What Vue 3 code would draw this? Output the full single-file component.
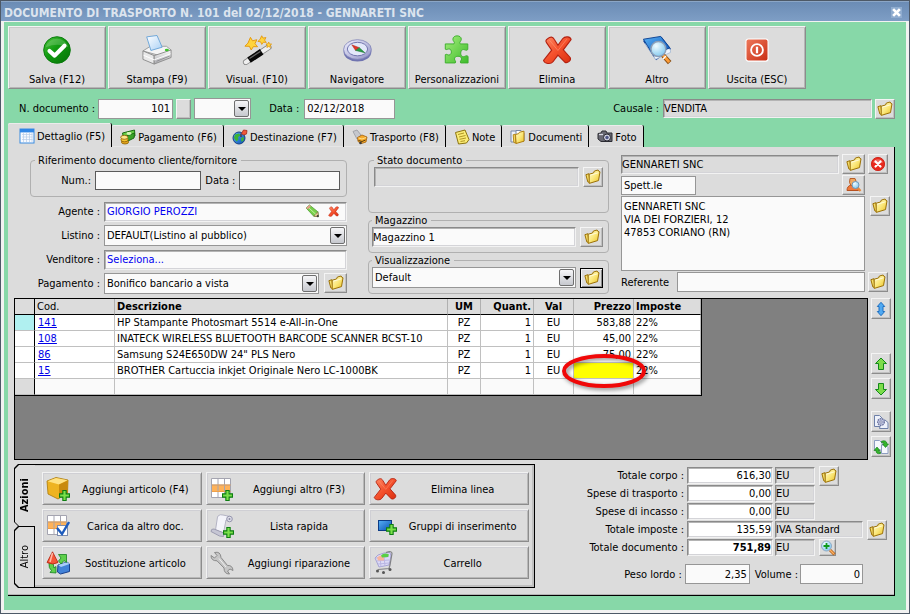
<script setup>
import { ref } from 'vue'

const toolbar = [
  { icon: 'check', label: 'Salva (F12)' },
  { icon: 'printer', label: 'Stampa (F9)' },
  { icon: 'wand', label: 'Visual. (F10)' },
  { icon: 'compass', label: 'Navigatore' },
  { icon: 'puzzle', label: 'Personalizzazioni' },
  { icon: 'cross', label: 'Elimina' },
  { icon: 'book', label: 'Altro' },
  { icon: 'power', label: 'Uscita (ESC)' },
]

const tabs = [
  { icon: 'sheet', label: 'Dettaglio (F5)' },
  { icon: 'money', label: 'Pagamento (F6)' },
  { icon: 'globe', label: 'Destinazione (F7)' },
  { icon: 'transport', label: 'Trasporto (F8)' },
  { icon: 'note', label: 'Note' },
  { icon: 'docs', label: 'Documenti' },
  { icon: 'camera', label: 'Foto' },
]
const activeTab = ref(0)

const address = ref('GENNARETI SNC\nVIA DEI FORZIERI, 12\n47853 CORIANO (RN)')

const rows = [
  { cod: '141', desc: 'HP Stampante Photosmart 5514 e-All-in-One', price: '583,88' },
  { cod: '108', desc: 'INATECK WIRELESS BLUETOOTH BARCODE SCANNER BCST-10', price: '45,00' },
  { cod: '86', desc: 'Samsung S24E650DW 24" PLS Nero', price: '75,00' },
  { cod: '15', desc: 'BROTHER Cartuccia inkjet Originale Nero LC-1000BK', price: '' },
]

const actions = [
  { icon: 'box-add', label: 'Aggiungi articolo (F4)' },
  { icon: 'table-add', label: 'Aggiungi altro (F3)' },
  { icon: 'cross', label: 'Elimina linea' },
  { icon: 'table-check', label: 'Carica da altro doc.' },
  { icon: 'scroll-add', label: 'Lista rapida' },
  { icon: 'group-add', label: 'Gruppi di inserimento' },
  { icon: 'swap', label: 'Sostituzione articolo' },
  { icon: 'wrench', label: 'Aggiungi riparazione' },
  { icon: 'cart', label: 'Carrello' },
]

const totals = [
  { id: 'corpo', label: 'Totale corpo :', value: '616,30', unit: 'EU', button: 'folder' },
  { id: 'trasporto', label: 'Spese di trasporto :', value: '0,00', unit: 'EU' },
  { id: 'incasso', label: 'Spese di incasso :', value: '0,00', unit: 'EU' },
  { id: 'imposte', label: 'Totale imposte :', value: '135,59', unit: 'IVA Standard', button: 'folder', wide: true },
  { id: 'documento', label: 'Totale documento :', value: '751,89', unit: 'EU', button: 'zoom', bold: true },
]
</script>

<template>
  <div class="window">
    <svg class="defs" width="0" height="0" aria-hidden="true">
      <defs>
        <linearGradient id="g-green" x1="0" y1="0" x2="1" y2="1"><stop offset="0" stop-color="#4cc43c" /><stop offset=".45" stop-color="#119a10" /><stop offset="1" stop-color="#067006" /></linearGradient>
        <linearGradient id="g-lime" x1="0" y1="0" x2="1" y2="1"><stop offset="0" stop-color="#a5ee7c" /><stop offset="1" stop-color="#3dbb2b" /></linearGradient>
        <linearGradient id="g-red" x1="0" y1="0" x2="1" y2="1"><stop offset="0" stop-color="#ff8a66" /><stop offset=".5" stop-color="#f4502c" /><stop offset="1" stop-color="#d92f10" /></linearGradient>
        <linearGradient id="g-power" x1="0" y1="0" x2="1" y2="1"><stop offset="0" stop-color="#ee7a5c" /><stop offset="1" stop-color="#c92c12" /></linearGradient>
        <linearGradient id="g-gold" x1="0" y1="0" x2="1" y2="1"><stop offset="0" stop-color="#fffbd0" /><stop offset=".5" stop-color="#fbe87c" /><stop offset="1" stop-color="#eabf20" /></linearGradient>
        <linearGradient id="g-blue" x1="0" y1="0" x2="1" y2="1"><stop offset="0" stop-color="#57b1f5" /><stop offset="1" stop-color="#0a4fb4" /></linearGradient>
        <linearGradient id="g-grey" x1="0" y1="0" x2="0" y2="1"><stop offset="0" stop-color="#fdfdfd" /><stop offset="1" stop-color="#a9a9ad" /></linearGradient>
        <linearGradient id="g-paper" x1="0" y1="0" x2="1" y2="1"><stop offset="0" stop-color="#ffffff" /><stop offset="1" stop-color="#a9d0f5" /></linearGradient>
        <linearGradient id="g-lilac" x1="0" y1="0" x2="1" y2="1"><stop offset="0" stop-color="#f2f2ff" /><stop offset="1" stop-color="#8f90c4" /></linearGradient>
        <radialGradient id="g-lens" cx=".35" cy=".3" r=".8"><stop offset="0" stop-color="#f0fcff" /><stop offset="1" stop-color="#79c4ee" /></radialGradient>
      </defs>

      <symbol id="plus" viewBox="0 0 10 10"><path d="M3.5.5h3v3h3v3h-3v3h-3v-3h-3v-3h3z" fill="#7be04a" stroke="#0d7d12" /></symbol>

      <symbol id="check" viewBox="0 0 32 32">
        <circle cx="16" cy="16" r="14.200" fill="url(#g-green)" stroke="#087a0b" />
        <path d="M4 13a12.500 12.500 0 0 1 24 0q-11-5-24 0z" fill="#fff" opacity=".18" />
        <path d="M8 17l5.500 5L24 11.500" fill="none" stroke="#fff" stroke-width="4.400" stroke-linecap="round" stroke-linejoin="round" />
      </symbol>
      <symbol id="printer" viewBox="0 0 32 32">
        <path d="M1 17l8-5h17l5 4-12 6z" fill="#f5f5f5" stroke="#9b9b9b" />
        <path d="M5 2l11-1.500 5.500 12.500-12 3.500z" fill="url(#g-paper)" stroke="#6ba4d8" />
        <path d="M1 17l12 5v9L1 26z" fill="#e9e9e9" stroke="#8c8c8c" />
        <path d="M13 22l18-6v8l-18 7z" fill="url(#g-grey)" stroke="#8c8c8c" />
        <path d="M1.500 21.500l11.500 5 17.500-6.500" fill="none" stroke="#fff" />
        <path d="M15.500 28l14-5.500" fill="none" stroke="#8e8e92" />
        <ellipse cx="26.500" cy="16" rx="2.200" ry="1.300" fill="#3ec42c" />
      </symbol>
      <symbol id="wand" viewBox="0 0 32 32">
        <path d="M4 29L28.500 13" stroke="#7f7f7f" stroke-width="6" stroke-linecap="round" />
        <path d="M4 29L28.500 13" stroke="#efefef" stroke-width="4.400" stroke-linecap="round" />
        <path d="M7.500 26.800L21 17.900" stroke="#080808" stroke-width="6.800" />
        <path d="M8 25l11.500-7.500" stroke="#696969" stroke-width="1.300" />
        <path d="M9 2.500l2.200 3.700 4.600-1.200-1.900 4.200 2.700 3.300-4.500-.1-2.300 3.600-1.900-3.900-4.800-.2 3.300-3.300z" fill="#ffd43c" stroke="#e3960b" />
        <path d="M21 .8l1.400 2.500 3.100-.6-1.400 2.800 1.800 2.400-3.100-.2-1.700 2.300-1.200-2.700-3-.5 2.300-2z" fill="#ffd43c" stroke="#e3960b" stroke-width=".9" />
        <path d="M28.500 7.500l.8 2 2.300.2-1.700 1.500.5 2.100-1.900-1-2 1 .5-2.200-1.400-1.500 2.100-.2z" fill="#ffd43c" stroke="#e3960b" stroke-width=".8" />
      </symbol>
      <symbol id="compass" viewBox="0 0 32 32">
        <ellipse cx="16.500" cy="17.800" rx="14.800" ry="10.500" fill="#7074b0" />
        <ellipse cx="16.500" cy="15.500" rx="14.800" ry="10.500" fill="url(#g-lilac)" stroke="#7a7db4" stroke-width=".8" />
        <ellipse cx="16.500" cy="15" rx="10.800" ry="7.200" fill="#e3e8fa" stroke="#6d70ab" />
        <path d="M10.500 10.500l8 3-4 3z" fill="#e1362a" stroke="#a8201a" stroke-width=".5" />
        <path d="M18.500 13.500l6 5.500-10-2.500z" fill="#279b44" stroke="#146b2b" stroke-width=".5" />
      </symbol>
      <symbol id="puzzle" viewBox="0 0 32 32">
        <path d="M3.500 9.500h9.300c1.700-1.600-1.300-2.800-1.200-5 .1-4.800 9-4.800 9 0 0 2.200-2.800 3.400-1.200 5h8.100v6c-1.300 1.700-2.800.1-4.700 0-3.800.2-3.800 7.500 0 7.600 2 0 3.400-2 5-.3v7H20c-1.600-1.500 1-2.600.9-4.300-.3-3.800-7.500-3.800-7.600 0 0 1.900 2.300 2.700.8 4.300H3.500V21c1.400-1.200 2.500.6 4 .4 3.400-.5 3.300-6.300 0-6.600-1.500-.1-2.600 1.500-4 .3z" fill="url(#g-lime)" stroke="#3cae2d" />
      </symbol>
      <symbol id="cross" viewBox="0 0 32 32">
        <path d="M6 4c3-2.500 5.500-2.200 7 .5l4 6.500 5-7C24.500 1 30.500 1.500 31 5l-8.300 10.800 7.300 8.200c1.600 3-2.500 6.300-5.500 5.200L17 21.500l-5.300 7c-2.200 2.900-9.200 2.500-10-1.300l8.600-11-5.500-8c-1.200-1.700-.6-3.200 1.200-4.200z" fill="url(#g-red)" stroke="#b32010" stroke-width="1.200" />
        <path d="M8 5.500l9 11 9.500-12" fill="none" stroke="#ff9d7d" opacity=".6" />
      </symbol>
      <symbol id="book" viewBox="0 0 32 32">
        <path d="M1 6l20-4 10 13-16 12z" fill="#0b3f9a" />
        <path d="M3 9l27 6 .5 3.500-16 7.500z" fill="#eef4fc" stroke="#8aa5c9" stroke-width=".6" />
        <path d="M1.500 4.500L20 1.500l9.500 12-17 9z" fill="url(#g-blue)" stroke="#0b4192" />
        <path d="M22 21l7.500 8.500" stroke="#8c5114" stroke-width="5" />
        <path d="M22.500 21.500l6.500 7.500" stroke="#ff9d38" stroke-width="3" />
        <path d="M25.500 22.500l-3 3" stroke="#fff" stroke-width="1.600" />
        <circle cx="17.500" cy="15" r="8" fill="url(#g-lens)" stroke="#8c9fb8" stroke-width="1.600" />
      </symbol>
      <symbol id="power" viewBox="0 0 32 32">
        <rect x="4.200" y="4.200" width="23.600" height="23.600" rx="2.500" fill="url(#g-power)" stroke="#fff" stroke-width="1.200" />
        <circle cx="16" cy="16" r="6.300" fill="none" stroke="#fff" stroke-width="2" />
        <path d="M16 12.500v7" stroke="#fff" stroke-width="2.400" />
      </symbol>

      <symbol id="folder" viewBox="0 0 16 16">
        <path d="M.9 5.700l3-1 1.200 9-2.300-.8z" fill="#f6de68" stroke="#9c7208" />
        <path d="M4.200 5.200L8.500 4l.9-2 3.700-1 .9 1.500 1 .3-1.500 8.800-9.300 2.800z" fill="url(#g-gold)" stroke="#9c7208" />
        <path d="M5.300 6.200l8.200-2.400" stroke="#fffce0" stroke-width=".9" />
      </symbol>
      <symbol id="red-x" viewBox="0 0 16 16">
        <circle cx="8" cy="8" r="6.600" fill="#e8281c" stroke="#cf2a20" />
        <path d="M3 6.500a5.500 5.500 0 0 1 10 0q-5 2-10 0z" fill="#fff" opacity=".3" />
        <path d="M5.500 5.500l5 5M10.500 5.500l-5 5" stroke="#fff" stroke-width="2.200" stroke-linecap="round" />
      </symbol>
      <symbol id="person" viewBox="0 0 16 16">
        <path d="M1 13.500c0-3 1.500-5 4-5.500h4c2.500 0 3.500 2 3.500 5.500z" fill="#ee7a3c" stroke="#b8501f" />
        <path d="M4 1.500h5l1.500 4-2 3H5l-1.500-3z" fill="#f0a860" stroke="#b8602a" />
        <path d="M11.500 10.500l3 3.500" stroke="#e88638" stroke-width="2.200" />
        <circle cx="9.500" cy="8" r="3.500" fill="url(#g-lens)" stroke="#6d97b8" />
      </symbol>
      <symbol id="zoom" viewBox="0 0 16 16">
        <path d="M10 10l4.500 4.500" stroke="#b56018" stroke-width="3" />
        <path d="M10 10l4 4" stroke="#ffb262" stroke-width="1.500" />
        <circle cx="6.500" cy="6" r="5" fill="url(#g-lens)" stroke="#8fa9c4" />
        <path d="M6.500 3v6M3.500 6h6" stroke="#0e9a1c" stroke-width="1.800" />
      </symbol>
      <symbol id="pencil" viewBox="0 0 16 16">
        <path d="M1.200 4.300l3.500-3.300 9 7.300.6 5.200-5-.5z" fill="#77cf48" stroke="#4a9c30" stroke-width=".8" />
        <path d="M1.200 4.300l3.500-3.300 1.600 1.400-3.500 3.200z" fill="#ee9a90" />
        <path d="M9.300 13L13.700 8.300l.6 5.200z" fill="#e9c997" stroke="#7d6742" stroke-width=".7" />
        <path d="M4.500 4.500l7 6.500" stroke="#c8f3a8" />
        <circle cx="13.600" cy="12.900" r="1.100" fill="#3a3a3a" />
      </symbol>

      <symbol id="sheet" viewBox="0 0 16 16">
        <rect x="1" y="1" width="14" height="14" fill="#f7faff" stroke="#3b8ce0" />
        <rect x="1" y="1" width="14" height="3.400" fill="#2f86e6" />
        <path d="M3 6.500h10.500M3 9h10.500M3 11.500h10.500M4.500 5v9M7.500 5v9M10.500 5v9M13 5v9" stroke="#b4cbe8" stroke-width=".7" />
      </symbol>
      <symbol id="money" viewBox="0 0 16 16">
        <path d="M2.500 4L14.500 1l.5 6-11 4z" fill="#67cc44" stroke="#1d6b14" />
        <path d="M3.500 8l11-4-.5 5-7 3.500z" fill="#3ba328" stroke="#1d6b14" />
        <ellipse cx="9" cy="4.500" rx="2.500" ry="1.400" fill="#d6f5b8" />
        <ellipse cx="5" cy="13" rx="3.600" ry="2" fill="#e6a81c" stroke="#8a5e05" stroke-width=".8" />
        <ellipse cx="4.500" cy="10.800" rx="3.600" ry="2" fill="#f7c632" stroke="#8a5e05" stroke-width=".8" />
        <ellipse cx="4.300" cy="8.300" rx="3.600" ry="2" fill="#ffe68a" stroke="#8a5e05" stroke-width=".8" />
      </symbol>
      <symbol id="globe" viewBox="0 0 16 16">
        <circle cx="7" cy="9" r="6" fill="url(#g-blue)" stroke="#173f85" />
        <path d="M3 5.500l4-1 1.500 2-2.500 1.500.5 2.500-2 2L2 9zM9 9l3-1-.5 3.500-2 1.500z" fill="#3fb334" />
        <path d="M9 8V4.500" stroke="#571411" />
        <path d="M9.500 4.500l2-3.500 3.500.5-.5 3.500-3 1z" fill="#f0583a" stroke="#a9261a" stroke-width=".8" />
      </symbol>
      <symbol id="transport" viewBox="0 0 16 16">
        <path d="M1 2.500l4-1.500 4 5-4 4z" fill="#c6c8ce" stroke="#a3a5ab" />
        <path d="M5.500 8.500l4.500-2.500 5 2-1 5-4.500 1.500-3.500-2z" fill="#f6a929" stroke="#a15f0e" stroke-width=".8" />
        <path d="M6.500 9l3.500 1 4-1.500" fill="none" stroke="#ffe08a" />
        <path d="M6.500 11.500l3.500 1 3.500-1.500" fill="none" stroke="#5a3c0c" />
        <circle cx="8.500" cy="14" r="1.300" fill="#3c3c3c" />
      </symbol>
      <symbol id="note" viewBox="0 0 16 16">
        <path d="M1.500 3.500L11 1l4 9.500-2.500 3.500-8 1z" fill="#faeb74" stroke="#8c7410" />
        <path d="M4 5.500l6-1.500M5 8l6.500-1.500M5.500 10.300l6.500-1.300M6.500 12.500l4.500-.8" stroke="#a88c1c" stroke-width=".9" />
      </symbol>
      <symbol id="docs" viewBox="0 0 16 16">
        <path d="M1 2h6v11H1z" fill="#eef2fa" stroke="#7888a8" />
        <path d="M6 1.500h5l3 3V12H6z" fill="#fff" stroke="#7888a8" />
        <path d="M5.500 5.500l3-.8 1-1.500 4.500-1v10L6 14.500z" fill="url(#g-gold)" stroke="#b07f10" />
        <path d="M3.200 5.700l2-.5.600 9-2-.8z" fill="#f6de68" stroke="#b07f10" stroke-width=".9" />
      </symbol>
      <symbol id="camera" viewBox="0 0 16 16">
        <path d="M1 4.500l3-.5 1-2h4l1 2h5v8.500H4L1 10z" fill="#686872" stroke="#2c2c33" />
        <circle cx="10" cy="8.500" r="3.500" fill="#d0d0de" stroke="#2c2c33" />
        <circle cx="10" cy="8.500" r="1.700" fill="#4e5687" />
        <path d="M2 5.500h4" stroke="#d8d8e2" stroke-width="1.300" />
      </symbol>

      <symbol id="updown" viewBox="0 0 16 16"><path d="M8 1.300l3.700 4.200H10v5h1.700L8 14.700l-3.700-4.200H6v-5H4.300z" fill="#4fa9f2" stroke="#1f6fc0" /></symbol>
      <symbol id="up" viewBox="0 0 16 16"><path d="M8 2l5.500 5.500h-3v6h-5v-6h-3z" fill="#7cdc4a" stroke="#148a1a" /></symbol>
      <symbol id="down" viewBox="0 0 16 16"><path d="M8 14l5.500-5.500h-3v-6h-5v6h-3z" fill="#7cdc4a" stroke="#148a1a" /></symbol>
      <symbol id="doc-gear" viewBox="0 0 16 16">
        <path d="M1.500 1.500h5l2.500 2.500v8.500H1.500z" fill="#eef2fb" stroke="#6d7fa8" />
        <path d="M8.500 6h3.500L15 8.500V14.500H6.500z" fill="#eef2fb" stroke="#6d7fa8" />
        <circle cx="8" cy="8" r="3.300" fill="#c2c8e2" stroke="#6c739f" stroke-width="1.400" stroke-dasharray="1.500 .8" />
        <circle cx="8" cy="8" r="1.200" fill="#fff" stroke="#6c739f" stroke-width=".8" />
      </symbol>
      <symbol id="doc-swap" viewBox="0 0 16 16">
        <path d="M1.500 1.500h5l2.500 2.500v7H1.500z" fill="#f6f8fd" stroke="#8d9dc0" />
        <path d="M8.500 6h4L15 8.500V14.500H8.500z" fill="#f6f8fd" stroke="#8d9dc0" />
        <path d="M8.500 2.200q5-1.700 5.500 2.800h1.500L12.500 8.500 9.500 5H11q0-2-2.500-1.500z" fill="#35b52b" stroke="#0e7716" stroke-width=".6" />
        <path d="M7.500 14.500Q3 15.500 3 11.500H1L4 8l3 3.500H5.500q0 1.800 2 1.300z" fill="#35b52b" stroke="#0e7716" stroke-width=".6" />
      </symbol>

      <symbol id="box-add" viewBox="0 0 24 24">
        <path d="M1 4l9-3.500L22 3l-.5 13L12 22 2 17z" fill="#eeb321" stroke="#a9780a" stroke-width=".8" />
        <path d="M1.500 4.300L10 1l11.500 2.300L13 7.500z" fill="#ffe283" />
        <path d="M13 7.500v14L21.300 16l.5-12.500z" fill="#c98a0d" />
        <use href="#plus" x="13" y="13" width="11" height="11" />
      </symbol>
      <symbol id="grid-base" viewBox="0 0 24 24">
        <path d="M1.500 1.500h19v19h-19z" fill="#fff" />
        <path d="M1.500 8h19v6.500h-19z" fill="#ffb258" />
        <path d="M1.500 1.500h19v19h-19zM8 1.500v19M14.500 1.500v19M1.500 8h19M1.500 14.500h19" fill="none" stroke="#a4a4b0" />
        <path d="M2 8h18.500M2 14.500h18.500" stroke="#eda04a" />
      </symbol>
      <symbol id="table-add" viewBox="0 0 24 24"><use href="#grid-base" width="24" height="24" /><use href="#plus" x="12" y="13" width="11" height="11" /></symbol>
      <symbol id="table-check" viewBox="0 0 24 24">
        <use href="#grid-base" width="24" height="24" />
        <rect x="11.500" y="11.500" width="10" height="10" fill="#fff" stroke="#7c8cae" />
        <path d="M11 14l5 6 7-12" fill="none" stroke="#1d5bbd" stroke-width="2.400" />
      </symbol>
      <symbol id="scroll-add" viewBox="0 0 24 24">
        <path d="M8 2q2-2 5-1l7 1.500-1 4-3-.5-2.500 13-8-3 2-13z" fill="#f4f4fa" stroke="#b4b4c4" />
        <path d="M1 17.500q0-3 3-2.500l10 4-.5 3.500-4-.5z" fill="#c6c6d4" stroke="#9c9cb0" />
        <circle cx="19.500" cy="5" r="2.800" fill="#dedeea" stroke="#9494ac" />
        <circle cx="19.500" cy="5" r="1" fill="#8b8ba2" />
        <use href="#plus" x="13" y="13" width="11" height="11" />
      </symbol>
      <symbol id="group-add" viewBox="0 0 24 24">
        <rect x="5.500" y="6.500" width="13" height="10" fill="url(#g-blue)" stroke="#0d3c86" />
        <use href="#plus" x="13" y="10" width="11" height="11" />
      </symbol>
      <symbol id="swap" viewBox="0 0 24 24">
        <path d="M12 14l9-3 2.500 2v7.500l-9 2.500-3-2z" fill="#4282d8" stroke="#173f8c" />
        <path d="M12 14l9-3 2.500 2-8.500 3z" fill="#a9cdf8" />
        <path d="M12.500 3.500h8v8l-2.500-2-3 3.500-2.500-3 2.500-3z" fill="#5fd04c" stroke="#168221" stroke-width=".8" />
        <path d="M3 12h4l1 5 2-1.500V22l-6-.5 1.500-2q-3-2-2.500-7.500z" fill="#5fd04c" stroke="#168221" stroke-width=".8" />
        <path d="M6.500.8L12 11.500q-5 3-11 0z" fill="#f4573a" stroke="#b4210f" stroke-width=".8" />
        <path d="M6.500 2l-2.500 9" stroke="#ffb9a6" stroke-width="1.500" />
      </symbol>
      <symbol id="wrench" viewBox="0 0 24 24">
        <path d="M4.500 1.500q6-1.500 6.500 5l6.500 8q5-.5 5.500 5l-3-1.500-2.500 2 2 3q-5.500 0-5.500-6L7 9.800Q1 10 1 4.500L4.500 7l2.500-2.500z" fill="#c6c6c6" stroke="#8a8a8a" />
        <path d="M9 7.500l7 8.500" stroke="#efefef" />
      </symbol>
      <symbol id="cart" viewBox="0 0 24 24">
        <path d="M2 7l3-3 6-2 6-.5L18 5l-2 9-10 2z" fill="#dcdaf6" stroke="#a6a3d4" />
        <path d="M3 7l13-1.500M3.500 10l12.500-1M5 13l11-1M7 6l1 10M11 5.500l1 9.500" stroke="#b9b6e4" />
        <path d="M4 6.500l3-2 4 1v4H5z" fill="#f8b49c" />
        <path d="M8 4.500q3-3.500 8-1l-1 2.500-6 .5z" fill="#58cf45" />
        <path d="M13 1.500q6-2 6 1l-2 11.500L16 17.500 5 18.500" fill="none" stroke="#808086" stroke-width="1.200" />
        <circle cx="4.500" cy="20" r="1.500" fill="#555" /><circle cx="10.500" cy="21.500" r="1.500" fill="#555" /><circle cx="17" cy="18.500" r="1.500" fill="#555" />
      </symbol>
    </svg>

    <header class="titlebar">
      <h1>DOCUMENTO DI TRASPORTO N. 101 del 02/12/2018 - GENNARETI SNC</h1>
      <button type="button" class="close" aria-label="Chiudi"><svg viewBox="0 0 8 8"><path d="M1 1l6 6M7 1L1 7" stroke="#fff" stroke-width="2.400" /></svg></button>
    </header>

    <main class="body">
      <nav class="toolbar" aria-label="Comandi">
        <button v-for="t in toolbar" :key="t.label" type="button" class="tool">
          <svg class="i30"><use :href="'#' + t.icon" /></svg>
          <span>{{ t.label }}</span>
        </button>
      </nav>

      <div class="docbar">
        <label for="ndoc">N. documento :</label>
        <input id="ndoc" class="flat num ndoc" value="101" />
        <button type="button" class="bevel blank" aria-label="Numerazione"></button>
        <span class="combo series"><select aria-label="Serie"><option></option></select><span class="drop"></span></span>
        <label for="ddoc" class="lab-date">Data :</label>
        <input id="ddoc" class="flat ddoc" value="02/12/2018" />
        <span class="spacer"></span>
        <label for="causale" class="lab-cau">Causale :</label>
        <input id="causale" class="sunken ro causale" value="VENDITA" readonly />
        <button type="button" class="bevel" aria-label="Apri causale"><svg class="i16"><use href="#folder" /></svg></button>
      </div>

      <div class="tabs" role="tablist">
        <button v-for="(t, i) in tabs" :key="t.label" type="button" role="tab" class="tab" :class="{ active: i === activeTab }" :aria-selected="i === activeTab" @click="activeTab = i">
          <svg class="i16"><use :href="'#' + t.icon" /></svg>{{ t.label }}
        </button>
      </div>

      <section class="panel">
        <div class="head">
          <div class="col">
            <fieldset class="ref">
              <legend>Riferimento documento cliente/fornitore</legend>
              <label for="rnum">Num.:</label><input id="rnum" class="dark" />
              <label for="rdata">Data :</label><input id="rdata" class="dark" />
            </fieldset>
            <div class="form">
              <label for="agente">Agente :</label>
              <div class="sunken agent">
                <input id="agente" class="link" value="GIORGIO PEROZZI" />
                <button type="button" class="ghost" aria-label="Modifica"><svg class="i15"><use href="#pencil" /></svg></button>
                <button type="button" class="ghost" aria-label="Rimuovi"><svg class="i11"><use href="#cross" /></svg></button>
              </div>
              <label for="listino">Listino :</label>
              <span class="combo"><select id="listino"><option>DEFAULT(Listino al pubblico)</option></select><span class="drop"></span></span>
              <label for="venditore">Venditore :</label>
              <input id="venditore" class="sunken link" value="Seleziona..." />
              <label for="pagamento">Pagamento :</label>
              <div class="pair">
                <span class="combo"><select id="pagamento"><option>Bonifico bancario a vista</option></select><span class="drop"></span></span>
                <button type="button" class="bevel wide" aria-label="Apri pagamento"><svg class="i16"><use href="#folder" /></svg></button>
              </div>
            </div>
          </div>

          <div class="col mid">
            <fieldset class="box tall">
              <legend>Stato documento</legend>
              <input class="sunken ro" aria-label="Stato documento" readonly />
              <button type="button" class="bevel" aria-label="Apri stato"><svg class="i16"><use href="#folder" /></svg></button>
            </fieldset>
            <fieldset class="box">
              <legend>Magazzino</legend>
              <input class="sunken" aria-label="Magazzino" value="Magazzino 1" />
              <button type="button" class="bevel wide" aria-label="Apri magazzino"><svg class="i16"><use href="#folder" /></svg></button>
            </fieldset>
            <fieldset class="box">
              <legend>Visualizzazione</legend>
              <span class="combo"><select aria-label="Visualizzazione"><option>Default</option></select><span class="drop"></span></span>
              <button type="button" class="bevel wide default" aria-label="Apri visualizzazione"><svg class="i16"><use href="#folder" /></svg></button>
            </fieldset>
          </div>

          <div class="col customer">
            <div class="crow">
              <input class="sunken ro" aria-label="Cliente" value="GENNARETI SNC" readonly />
              <button type="button" class="bevel wide" aria-label="Apri cliente"><svg class="i16"><use href="#folder" /></svg></button>
              <button type="button" class="bevel" aria-label="Rimuovi cliente"><svg class="i16"><use href="#red-x" /></svg></button>
            </div>
            <div class="crow">
              <input class="flat title" aria-label="Titolo" value="Spett.le" />
              <span class="spacer"></span>
              <button type="button" class="bevel wide" aria-label="Cerca cliente"><svg class="i16"><use href="#person" /></svg></button>
              <span class="hole"></span>
            </div>
            <div class="crow address">
              <textarea v-model="address" class="flat" aria-label="Indirizzo"></textarea>
              <button type="button" class="bevel" aria-label="Apri indirizzo"><svg class="i16"><use href="#folder" /></svg></button>
            </div>
            <div class="crow">
              <label for="referente">Referente</label>
              <input id="referente" class="flat" />
              <button type="button" class="bevel" aria-label="Apri referente"><svg class="i16"><use href="#folder" /></svg></button>
            </div>
          </div>
        </div>

        <div class="lines">
          <div class="gridview">
            <table>
              <thead>
                <tr><th class="sel"></th><th class="cod">Cod.</th><th class="desc">Descrizione</th><th class="um">UM</th><th class="qt">Quant.</th><th class="val">Val</th><th class="pr">Prezzo</th><th class="imp">Imposte</th></tr>
              </thead>
              <tbody>
                <tr v-for="(r, i) in rows" :key="r.cod">
                  <td class="sel" :class="{ current: i === 0 }"></td>
                  <td><a href="#">{{ r.cod }}</a></td>
                  <td>{{ r.desc }}</td>
                  <td class="um">PZ</td>
                  <td class="qt">1</td>
                  <td class="val">EU</td>
                  <td class="pr" :class="{ missing: !r.price }">
                    {{ r.price }}
                    <svg v-if="!r.price" class="ring" viewBox="0 0 92 44" aria-hidden="true"><ellipse cx="45" cy="21" rx="40" ry="15" fill="none" stroke="#f00808" stroke-width="4" /></svg>
                  </td>
                  <td>22%</td>
                </tr>
                <tr class="new"><td class="sel"></td><td></td><td></td><td></td><td></td><td></td><td></td><td></td></tr>
              </tbody>
            </table>
          </div>
          <div class="side">
            <button type="button" class="bevel" aria-label="Ordina"><svg class="i16"><use href="#updown" /></svg></button>
            <button type="button" class="bevel push" aria-label="Su"><svg class="i16"><use href="#up" /></svg></button>
            <button type="button" class="bevel" aria-label="Giù"><svg class="i16"><use href="#down" /></svg></button>
            <button type="button" class="bevel apart" aria-label="Impostazioni riga"><svg class="i16"><use href="#doc-gear" /></svg></button>
            <button type="button" class="bevel last" aria-label="Converti"><svg class="i16"><use href="#doc-swap" /></svg></button>
          </div>
        </div>

        <div class="foot">
          <div class="actions">
            <div class="vtabs" role="tablist">
              <button type="button" role="tab" class="vtab on" aria-selected="true"><span>Azioni</span></button>
              <button type="button" role="tab" class="vtab" aria-selected="false"><span>Altro</span></button>
            </div>
            <div class="pad">
              <button v-for="a in actions" :key="a.label" type="button" class="act">
                <svg class="i24"><use :href="'#' + a.icon" /></svg><span>{{ a.label }}</span>
              </button>
            </div>
          </div>

          <div class="totals">
            <div v-for="t in totals" :key="t.id" class="trow">
              <label :for="t.id">{{ t.label }}</label>
              <input :id="t.id" class="sunken num amount" :class="{ bold: t.bold }" :value="t.value" />
              <div class="tail">
                <input class="sunken ro unit" :class="{ long: t.wide }" :value="t.unit" :aria-label="t.label + ' unità'" readonly />
                <button v-if="t.button" type="button" class="bevel" :class="{ small: t.button === 'zoom' }" :aria-label="'Apri ' + t.id"><svg class="i16"><use :href="'#' + t.button" /></svg></button>
              </div>
            </div>
            <div class="trow weight">
              <label for="peso">Peso lordo :</label>
              <input id="peso" class="flat num w65" value="2,35" />
              <label for="volume" class="vol">Volume :</label>
              <input id="volume" class="flat num w63" value="0" />
            </div>
          </div>
        </div>
      </section>
    </main>
  </div>
</template>

<style>
body {
  margin: 0;
}
</style>

<style scoped>
.window,
.window * {
  box-sizing: border-box;
}
.window {
  display: flex;
  flex-direction: column;
  min-height: 100vh;
  border: 1px solid #4d5967;
  background: #f2f2f2;
  color: #000;
  font: 11px/13px "DejaVu Sans Condensed", "DejaVu Sans", sans-serif;
}
.defs {
  position: absolute;
}
button,
input,
select,
textarea {
  margin: 0;
  padding: 0;
  border: 0;
  border-radius: 0;
  font: inherit;
  color: inherit;
  background: none;
  outline: none;
  min-width: 0;
}
button {
  display: flex;
  align-items: center;
  justify-content: center;
}
label {
  white-space: nowrap;
}
svg {
  flex: none;
  display: block;
}
.i30 { width: 30px; height: 30px; }
.i24 { width: 24px; height: 24px; }
.i16 { width: 16px; height: 16px; }
.i15 { width: 15px; height: 15px; }
.i11 { width: 11px; height: 11px; }
.spacer { flex: 1; }

.titlebar {
  display: flex;
  align-items: center;
  justify-content: space-between;
  height: 20px;
  padding: 3px 7px 0 3px;
  border-top: 1px solid #8ba6c6;
  background: linear-gradient(#6b8cb5, #7e9ec5);
}
.titlebar h1 {
  margin: 0;
  font-size: 12px;
  line-height: 16px;
  color: #dce4ee;
}
.close {
  width: 11px;
  height: 11px;
  margin-bottom: 2px;
  background: #8faccf;
}
.close svg {
  width: 9px;
  height: 9px;
}

.body {
  flex: 1;
  display: flex;
  flex-direction: column;
  margin: 1px 3px 3px;
  padding: 4px 11px 14px 4px;
  background: #87d8a8;
}

.toolbar {
  display: flex;
  gap: 2px;
}
.tool {
  flex: 0 1 98px;
  flex-direction: column;
  gap: 8px;
  height: 63px;
  padding: 6px 0 0;
  border: 1px solid;
  border-color: #f4f4f4 #8c8c8c #8c8c8c #f4f4f4;
  box-shadow: inset 1px 1px #cacaca, inset -1px -1px #b6b6b6;
  background: #dcdcdc;
}

.docbar {
  display: flex;
  align-items: center;
  height: 21px;
  margin-top: 9px;
  padding-left: 11px;
}
.flat {
  height: 20px;
  padding: 0 2px;
  border: 1px solid #969696;
  background: #fafafa;
}
.dark {
  height: 19px;
  padding: 0 2px;
  border: 1px solid #5a5a5a;
  background: #fafafa;
}
.sunken {
  height: 19px;
  border: 1px solid;
  border-color: #8a8a8a #f2f2f2 #f2f2f2 #8a8a8a;
  box-shadow: inset 1px 1px #b4b4b4, inset -1px -1px #d4d4d8;
  background: #fafafa;
}
.ro {
  background: #dcdcdc;
}
.num {
  text-align: right;
}
.ndoc {
  width: 75px;
  margin-left: 3px;
}
.blank {
  width: 15px;
  margin: 0 3px;
}
.series {
  width: 57px;
}
.lab-date {
  margin: 0 5px 0 18px;
}
.ddoc {
  width: 91px;
}
.lab-cau {
  margin-right: 4px;
}
.causale {
  width: 209px;
  margin-right: 3px;
}
.bevel {
  flex: none;
  width: 20px;
  height: 20px;
  border: 1px solid;
  border-color: #f4f4f4 #8c8c8c #8c8c8c #f4f4f4;
  box-shadow: inset -1px -1px #c0c0c0;
  background: #dcdcdc;
}
.bevel.blank {
  width: 15px;
}
.bevel.wide {
  width: 23px;
}
.bevel.small {
  width: 17px;
  height: 17px;
}
.bevel.default {
  border-color: #000;
  box-shadow: inset 1px 1px #f4f4f4, inset -1px -1px #8c8c8c;
}
.combo {
  display: grid;
  height: 21px;
  border: 1px solid #969696;
  background: #fafafa;
}
.combo select {
  grid-area: 1 / 1;
  width: 100%;
  padding: 0 18px 0 2px;
  appearance: none;
}
.drop {
  grid-area: 1 / 1;
  justify-self: end;
  display: grid;
  place-items: center;
  width: 15px;
  margin: 1px;
  border: 1px solid #6e6e6e;
  border-radius: 2px;
  background: linear-gradient(#f6f6f8, #c6c8ce);
  pointer-events: none;
}
.drop::after {
  content: "";
  border: 4px solid transparent;
  border-top-color: #000;
  border-bottom: 0;
}

.tabs {
  display: flex;
  align-items: flex-end;
  height: 24px;
  margin-top: 4px;
}
.tab {
  gap: 2px;
  height: 22px;
  padding: 2px 6px 0 8px;
  border-right: 1px solid #000;
  border-radius: 2px 2px 0 0;
  background: #dcdcdc;
  white-space: nowrap;
  box-shadow: inset 0 1px #ececec, inset 0 -1px #e6e6e6;
}
.tab.active {
  height: 24px;
  padding: 2px 6px 0 11px;
  box-shadow: inset 0 1px #ececec;
}

.panel {
  flex: 1;
  display: flex;
  flex-direction: column;
  padding: 7px 3px 7px 6px;
  border-right: 1px solid #000;
  border-bottom: 1px solid #000;
  background: #dcdcdc;
  box-shadow: inset 0 -1px #b4b4b4;
}
.head {
  display: grid;
  grid-template-columns: minmax(0, 317fr) minmax(0, 262fr) minmax(0, 282fr);
  padding-left: 16px;
}
fieldset {
  display: flex;
  align-items: center;
  min-width: 0;
  margin: 0;
  border: 1px solid #b0b0b0;
  border-radius: 4px;
}
legend {
  height: 13px;
  padding: 0 4px 0 3px;
  white-space: nowrap;
}
.ref {
  gap: 4px;
  height: 43px;
  padding: 4px 6px 6px 4px;
}
.ref label:first-of-type {
  width: 56px;
  text-align: right;
}
.ref input {
  flex: 105 1 0;
}
.ref input:last-child {
  flex-grow: 99;
}
.form {
  display: grid;
  grid-template-columns: 70px minmax(0, 1fr);
  grid-auto-rows: 21px;
  gap: 3px 4px;
  align-items: center;
  margin-top: 4px;
}
.form label {
  text-align: right;
}
.form .sunken {
  height: 20px;
  padding: 0 2px;
}
.agent {
  display: flex;
  align-items: center;
  gap: 8px;
}
.agent input {
  flex: 1;
}
.form .agent {
  padding-right: 7px;
}
.link {
  color: #0000f0;
}
.pair {
  display: flex;
  gap: 5px;
}
.pair .combo {
  flex: 1;
}

.mid {
  display: flex;
  flex-direction: column;
  gap: 1px;
  padding-left: 21px;
}
.box {
  justify-content: space-between;
  gap: 4px;
  padding: 0 5px 5px 3px;
}
.tall {
  height: 59px;
  padding: 0 5px 24px;
}
.box .sunken,
.box .combo {
  flex: 1;
}
.box .sunken {
  height: 20px;
}

.customer {
  display: flex;
  flex-direction: column;
  gap: 1px;
  padding-left: 12px;
}
.crow {
  display: flex;
  align-items: center;
  gap: 3px;
  padding-right: 3px;
}
.crow > .ro {
  flex: 1;
}
.crow .title {
  width: 75px;
  height: 19px;
}
.hole {
  width: 20px;
}
.crow:last-child label {
  width: 53px;
}
.crow:last-child input {
  flex: 1;
}
.crow.address {
  align-items: flex-start;
  gap: 5px;
  padding-right: 1px;
}
.address textarea {
  display: block;
  flex: 1;
  height: 75px;
  padding: 3px 2px;
  resize: none;
}

.lines {
  flex: 1;
  display: flex;
  gap: 3px;
  min-height: 160px;
  margin-top: 4px;
}
.gridview {
  flex: 1;
  border: 1px solid #000;
  background: #808080;
}
table {
  width: 687px;
  border-collapse: separate;
  border-spacing: 0;
  table-layout: fixed;
  border-right: 1px solid #000;
  border-bottom: 1px solid #000;
}
th,
td {
  height: 16px;
  padding: 1px 2px 0;
  border-right: 1px solid #c0c0c0;
  border-bottom: 1px solid #c0c0c0;
  background: #fff;
  line-height: 14px;
  text-align: left;
  white-space: nowrap;
}
th {
  background: #dcdcdc;
  border-bottom-color: #000;
  border-right-color: #b0b0b0;
}
th.cod {
  width: 80px;
  font-weight: normal;
}
th.sel { width: 20px; }
th.desc { width: 333px; }
th.um { width: 33px; }
th.qt { width: 53px; }
th.val { width: 40px; }
th.pr { width: 60px; }
.sel {
  border-right-color: #000;
}
.um,
.val {
  text-align: center;
}
.qt,
.pr {
  text-align: right;
}
.current {
  background: #b0f0f0;
}
.new td {
  background: #fafafa;
}
.new .sel {
  background: #dcdcdc;
}
td a {
  color: #0000e8;
  margin-left: 1px;
}
.missing {
  position: relative;
  background: #ff0;
}
.ring {
  position: absolute;
  left: -15px;
  top: -13px;
  width: 92px;
  height: 44px;
  overflow: visible;
  filter: drop-shadow(2px 2px 2px rgba(0, 0, 0, 0.45));
}
.side {
  display: flex;
  flex-direction: column;
  width: 20px;
  gap: 4px;
}
.side .bevel {
  height: 21px;
}
.side .push {
  margin-top: 30px;
}
.side .apart {
  margin-top: 8px;
}

.foot {
  display: flex;
  justify-content: space-between;
  margin-top: 4px;
}
.actions {
  display: flex;
  width: 521px;
}
.vtabs {
  display: flex;
  flex-direction: column;
  width: 21px;
  margin-right: -1px;
}
.vtab {
  position: relative;
  flex: 1;
  background: #000;
  clip-path: polygon(4px 0, 100% 0, 100% 100%, 4px 100%, 0 calc(100% - 4px), 0 4px);
}
.vtab::before {
  content: "";
  position: absolute;
  inset: 1px;
  background: #dcdcdc;
  clip-path: polygon(4px 0, 100% 0, 100% 100%, 4px 100%, 0 calc(100% - 4px), 0 4px);
}
.vtab span {
  position: relative;
  writing-mode: vertical-rl;
  transform: rotate(180deg);
}
.vtab.on {
  font-weight: bold;
  z-index: 1;
}
.vtab.on::before {
  right: 0;
  bottom: 0;
}
.pad {
  flex: 1;
  display: grid;
  grid-template-columns: repeat(3, 1fr);
  gap: 4px;
  padding: 7px 5px 8px 7px;
  border: 1px solid #000;
  box-shadow: inset -2px -2px #c0c0c0, inset 0 1px #c8c8c8;
}
.act {
  height: 33px;
  padding: 1px 0 0 3px;
  border: 1px solid;
  border-color: #f2f2f2 #8c8c8c #8c8c8c #f2f2f2;
  box-shadow: inset 1px 1px #cfcfd4, inset -1px -1px #b8b8b8;
}
.act span {
  flex: 1;
  white-space: nowrap;
}

.totals {
  flex: 1;
  display: flex;
  flex-direction: column;
  gap: 1px;
  padding-top: 3px;
}
.trow {
  display: flex;
  align-items: center;
  justify-content: flex-end;
  height: 17px;
}
.trow label {
  margin-right: 3px;
}
.trow .sunken {
  height: 17px;
  padding-right: 1px;
}
.amount {
  width: 86px;
  margin-right: 2px;
}
.trow .amount {
  background: #fff;
}
.bold {
  font-weight: bold;
}
.tail {
  display: flex;
  align-items: center;
  gap: 4px;
  width: 116px;
}
.unit {
  width: 40px;
}
.unit.long {
  width: 88px;
}
.weight {
  height: 20px;
  margin-top: 7px;
  padding-right: 28px;
}
.w65 {
  width: 65px;
}
.w63 {
  width: 63px;
}
.weight .vol {
  margin: 0 2px 0 5px;
}
</style>
